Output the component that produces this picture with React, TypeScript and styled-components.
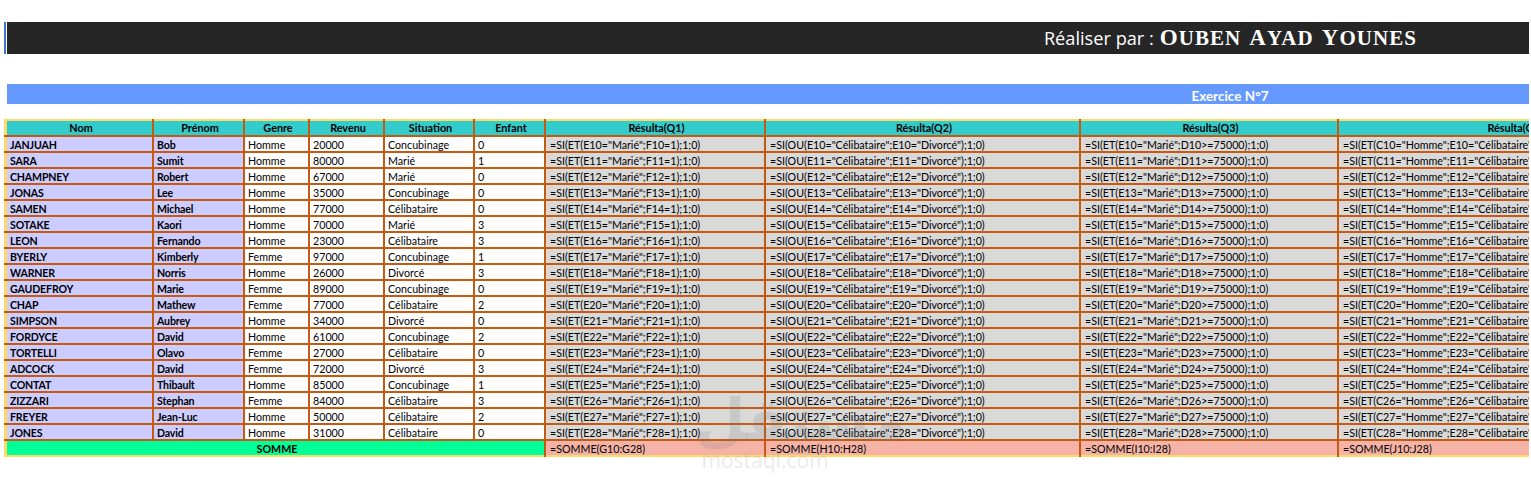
import React from 'react';
import styled, { createGlobalStyle } from 'styled-components';

type Person = [string, string, string, string, string, string];

const people: Person[] = [
  ['JANJUAH', 'Bob', 'Homme', '20000', 'Concubinage', '0'],
  ['SARA', 'Sumit', 'Homme', '80000', 'Marié', '1'],
  ['CHAMPNEY', 'Robert', 'Homme', '67000', 'Marié', '0'],
  ['JONAS', 'Lee', 'Homme', '35000', 'Concubinage', '0'],
  ['SAMEN', 'Michael', 'Homme', '77000', 'Célibataire', '0'],
  ['SOTAKE', 'Kaori', 'Homme', '70000', 'Marié', '3'],
  ['LEON', 'Fernando', 'Homme', '23000', 'Célibataire', '3'],
  ['BYERLY', 'Kimberly', 'Femme', '97000', 'Concubinage', '1'],
  ['WARNER', 'Norris', 'Homme', '26000', 'Divorcé', '3'],
  ['GAUDEFROY', 'Marie', 'Femme', '89000', 'Concubinage', '0'],
  ['CHAP', 'Mathew', 'Femme', '77000', 'Célibataire', '2'],
  ['SIMPSON', 'Aubrey', 'Homme', '34000', 'Divorcé', '0'],
  ['FORDYCE', 'David', 'Homme', '61000', 'Concubinage', '2'],
  ['TORTELLI', 'Olavo', 'Femme', '27000', 'Célibataire', '0'],
  ['ADCOCK', 'David', 'Femme', '72000', 'Divorcé', '3'],
  ['CONTAT', 'Thibault', 'Homme', '85000', 'Concubinage', '1'],
  ['ZIZZARI', 'Stephan', 'Femme', '84000', 'Célibataire', '3'],
  ['FREYER', 'Jean-Luc', 'Homme', '50000', 'Célibataire', '2'],
  ['JONES', 'David', 'Homme', '31000', 'Célibataire', '0'],
];

const headers = ['Nom', 'Prénom', 'Genre', 'Revenu', 'Situation', 'Enfant', 'Résulta(Q1)', 'Résulta(Q2)', 'Résulta(Q3)', 'Résulta(Q4)'];

const formulas = (n: number) => [
  `=SI(ET(E${n}="Marié";F${n}=1);1;0)`,
  `=SI(OU(E${n}="Célibataire";E${n}="Divorcé");1;0)`,
  `=SI(ET(E${n}="Marié";D${n}>=75000);1;0)`,
  `=SI(ET(C${n}="Homme";E${n}="Célibataire");1;0)`,
];

const orange = '#c55a11';
const yellow = '#ffd966';
const columns = '150px 91px 65px 75px 90px 71px 220px 315px 258px 352px';

const GlobalStyle = createGlobalStyle`
  html, body {
    margin: 0;
    background: #fff;
  }
  body {
    font-family: Lato, "Liberation Sans", sans-serif;
    overflow: hidden;
  }
`;

const Page = styled.div`
  position: relative;
  width: 1531px;
  height: 478px;
  padding: 22px 2px 0 4px;
  box-sizing: border-box;
  overflow: hidden;
`;

const TitleBar = styled.header`
  height: 32px;
  border-left: 2px solid #4472c4;
  padding-left: 1px;
`;

const TitleInner = styled.div`
  height: 100%;
  background: #262626;
  color: #fff;
  display: flex;
  justify-content: flex-end;
  align-items: center;
  gap: 6px;
  padding-right: 112px;
`;

const TitleLabel = styled.span`
  font-family: "Open Sans", sans-serif;
  font-size: 18.2px;
`;

const TitleName = styled.span`
  display: flex;
  gap: 8px;
  font-family: "Liberation Serif", serif;
  font-size: 21px;
  font-weight: bold;
  letter-spacing: 1.05px;
`;

const NameWord = styled.span`
  display: inline-block;

  &::first-letter {
    font-size: 23px;
  }
`;

const ExerciseBar = styled.div`
  margin: 30px 0 15px 3px;
  height: 20px;
  background: #6699ff;
  color: #fff;
  font-size: 13.5px;
  font-weight: bold;
  line-height: 24px;
  text-align: center;
  padding-left: 924px;
`;

const Sheet = styled.div`
  overflow: hidden;
  font-size: 10.7px;
  color: #000;
`;

const Row = styled.div`
  display: grid;
  grid-template-columns: ${columns};
  width: 1687px;
  height: 16px;
  box-sizing: border-box;
  border-bottom: 2px solid ${orange};
`;

const HeadRow = styled(Row)`
  height: 18px;
`;

const TotalRow = styled(Row)`
  border-bottom: 0;
`;

const Cell = styled.div`
  box-sizing: border-box;
  border-right: 2px solid ${orange};
  background: #fff;
  padding: 1px 0 0 3px;
  line-height: 14px;
  white-space: nowrap;
  overflow: hidden;

  &:first-child {
    border-left: 3px solid ${yellow};
  }
`;

const NameCell = styled(Cell)`
  background: #ccccff;
  font-weight: bold;
  font-size: 10.6px;
  letter-spacing: -0.15px;
`;

const FormulaCell = styled(Cell)`
  background: #d9d9d9;
  padding-left: 4px;
`;

const HeadCell = styled(Cell)`
  background: linear-gradient(${yellow} 2px, #33cccc 2px);
  font-weight: bold;
  font-size: 10.8px;
  text-align: center;
  padding: 2px 0 0 3px;
  line-height: 13px;
`;

const SumLabel = styled(Cell)`
  grid-column: span 6;
  background: linear-gradient(#00ff99 14px, ${yellow} 14px);
  font-weight: bold;
  text-align: center;
  padding: 0 0 0 3px;
  line-height: 16px;
`;

const SumCell = styled(Cell)`
  background: linear-gradient(#f4b3a6 14px, ${yellow} 14px);
  padding: 0 0 0 4px;
  line-height: 16px;
`;

const Watermark = styled.div`
  position: absolute;
  left: 695px;
  width: 140px;
  text-align: center;
  color: rgba(120, 120, 120, 0.17);
  pointer-events: none;
`;

const WatermarkLogo = styled(Watermark)`
  top: 386px;
  font-family: "DejaVu Sans", sans-serif;
  font-size: 58px;
  font-weight: bold;
  line-height: 68px;
`;

const WatermarkUrl = styled(Watermark)`
  top: 448px;
  font-family: "Open Sans", sans-serif;
  font-size: 21px;
  line-height: 24px;
`;

export default function App() {
  return (
    <Page>
      <GlobalStyle />
      <TitleBar>
        <TitleInner>
          <TitleLabel>Réaliser par :</TitleLabel>
          <TitleName>
            <NameWord>OUBEN</NameWord>
            <NameWord>AYAD</NameWord>
            <NameWord>YOUNES</NameWord>
          </TitleName>
        </TitleInner>
      </TitleBar>
      <ExerciseBar>Exercice N°7</ExerciseBar>
      <Sheet>
        <HeadRow>
          {headers.map((h) => (
            <HeadCell key={h}>{h}</HeadCell>
          ))}
        </HeadRow>
        {people.map((p, i) => (
          <Row key={p[0]}>
            <NameCell>{p[0]}</NameCell>
            <NameCell>{p[1]}</NameCell>
            <Cell>{p[2]}</Cell>
            <Cell>{p[3]}</Cell>
            <Cell>{p[4]}</Cell>
            <Cell>{p[5]}</Cell>
            {formulas(i + 10).map((f) => (
              <FormulaCell key={f}>{f}</FormulaCell>
            ))}
          </Row>
        ))}
        <TotalRow>
          <SumLabel>SOMME</SumLabel>
          {['G', 'H', 'I', 'J'].map((c) => (
            <SumCell key={c}>{`=SOMME(${c}10:${c}28)`}</SumCell>
          ))}
        </TotalRow>
      </Sheet>
      <WatermarkLogo>مستقل</WatermarkLogo>
      <WatermarkUrl>mostaql.com</WatermarkUrl>
    </Page>
  );
}
